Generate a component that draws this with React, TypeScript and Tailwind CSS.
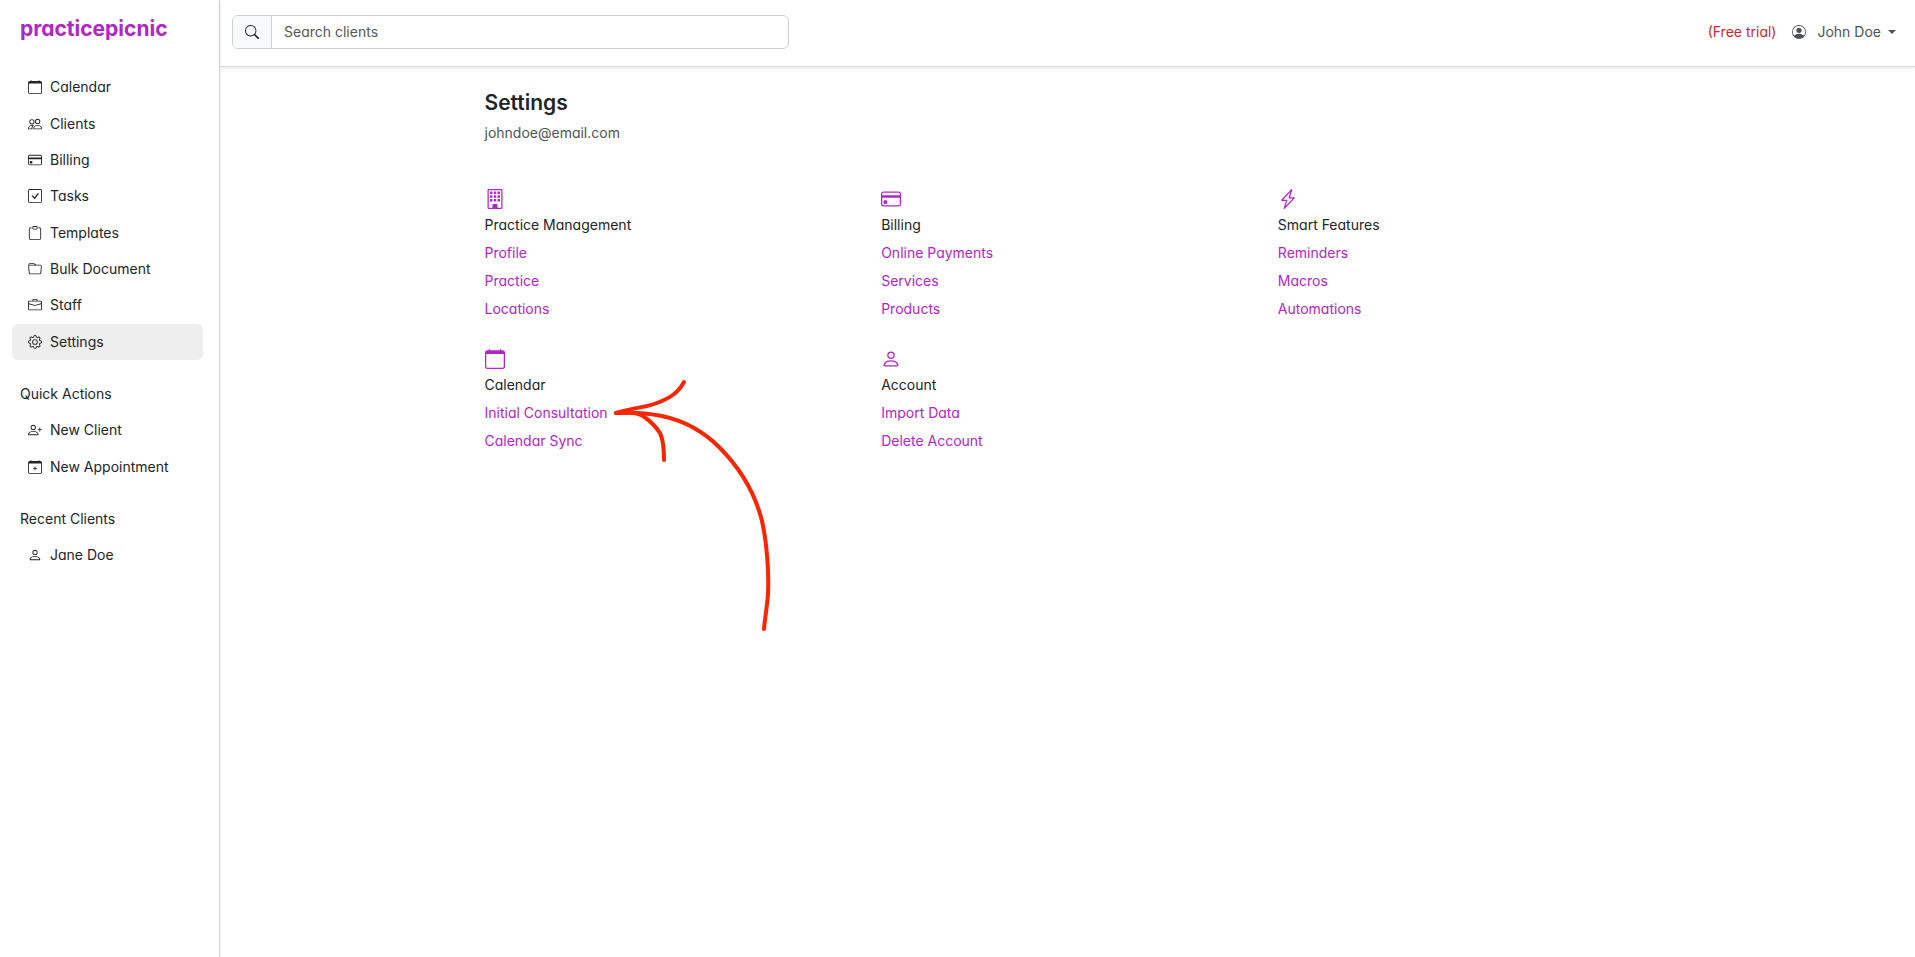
import type { IconType } from "react-icons";
import {
  BsBriefcase,
  BsBuilding,
  BsCalendar,
  BsCalendarPlus,
  BsCheckSquare,
  BsClipboard,
  BsCreditCard,
  BsFolder,
  BsGear,
  BsLightningCharge,
  BsPeople,
  BsPerson,
  BsPersonCircle,
  BsPersonPlus,
  BsSearch,
} from "react-icons/bs";

type NavEntry = { label: string; icon: IconType; active?: boolean };

const mainNav: NavEntry[] = [
  { label: "Calendar", icon: BsCalendar },
  { label: "Clients", icon: BsPeople },
  { label: "Billing", icon: BsCreditCard },
  { label: "Tasks", icon: BsCheckSquare },
  { label: "Templates", icon: BsClipboard },
  { label: "Bulk Document", icon: BsFolder },
  { label: "Staff", icon: BsBriefcase },
  { label: "Settings", icon: BsGear, active: true },
];

const quickActions: NavEntry[] = [
  { label: "New Client", icon: BsPersonPlus },
  { label: "New Appointment", icon: BsCalendarPlus },
];

const recentClients: NavEntry[] = [{ label: "Jane Doe", icon: BsPerson }];

const groups: { title: string; icon: IconType; links: string[] }[] = [
  { title: "Practice Management", icon: BsBuilding, links: ["Profile", "Practice", "Locations"] },
  { title: "Billing", icon: BsCreditCard, links: ["Online Payments", "Services", "Products"] },
  { title: "Smart Features", icon: BsLightningCharge, links: ["Reminders", "Macros", "Automations"] },
  { title: "Calendar", icon: BsCalendar, links: ["Initial Consultation", "Calendar Sync"] },
  { title: "Account", icon: BsPerson, links: ["Import Data", "Delete Account"] },
];

function NavList({ items, className }: { items: NavEntry[]; className?: string }) {
  return (
    <ul className={`grid auto-rows-fr px-3 ${className ?? ""}`}>
      {items.map(({ label, icon: Icon, active }) => (
        <li key={label} className="mr-1">
          <a
            href="#"
            aria-current={active ? "page" : undefined}
            className={`flex h-full items-center gap-2 rounded-md pl-4 ${active ? "bg-[#eeeeee]" : ""}`}
          >
            <Icon className="size-3.5 shrink-0" />
            {label}
          </a>
        </li>
      ))}
    </ul>
  );
}

function Arrow() {
  return (
    <svg
      className="pointer-events-none absolute -top-6 left-[127px]"
      width="165"
      height="260"
      viewBox="0 0 165 260"
      fill="none"
      stroke="#fa2600"
      strokeWidth="4"
      strokeLinecap="round"
      strokeLinejoin="round"
      aria-hidden="true"
    >
      <path d="M72 7C66 18 58 23 45 28C32 33 19 33 4 38C21 37 35 38 50 41C73 46 92 57 107 72C128 93 143 118 150 146C155 168 157 198 156 219C155 232 153 243 152 254" />
      <path d="M4 38C14 37 24 37 31 41C37 45 44 52 48 58C52 66 52 76 52 85" />
    </svg>
  );
}

export default function App() {
  return (
    <div className="flex min-h-screen bg-white font-['Inter',sans-serif] text-sm text-[#212529] [font-feature-settings:'cv11']">
      <aside className="w-[220px] shrink-0 border-r border-[#d5d5d5] shadow-[0_2px_4px_rgba(0,0,0,0.08)]">
        <a href="#" className="block px-5 pt-[13px] text-[21px] leading-8 font-bold text-[#b026c6]">
          practicepicnic
        </a>
        <nav aria-label="Main" className="mt-6">
          <NavList items={mainNav} className="h-[291px]" />
        </nav>
        <section className="mt-5">
          <h2 className="px-5 leading-7">Quick Actions</h2>
          <NavList items={quickActions} className="mt-1 h-[73px]" />
        </section>
        <section className="mt-5">
          <h2 className="px-5 leading-7">Recent Clients</h2>
          <NavList items={recentClients} className="mt-1 h-9" />
        </section>
      </aside>

      <div className="flex min-w-0 flex-1 flex-col">
        <header className="flex h-[67px] items-start justify-between border-b border-[#d9d9d9] pt-[15px] pr-[19px] pl-3 shadow-[0_2px_4px_rgba(0,0,0,0.08)]">
          <form className="flex h-[34px] w-[557px] overflow-hidden rounded-md border border-[#ced0d2]">
            <label
              htmlFor="search"
              aria-label="Search clients"
              className="flex w-[39px] items-center justify-center border-r border-[#ced0d2] bg-[#f8f9fa]"
            >
              <BsSearch className="size-3.5" />
            </label>
            <input
              id="search"
              type="search"
              placeholder="Search clients"
              className="min-w-0 flex-1 px-3 outline-none placeholder:text-[#55585b]"
            />
          </form>
          <div className="flex h-[34px] items-center text-[#505356]">
            <span className="text-[#c9283a]">(Free trial)</span>
            <button type="button" className="ml-4 flex items-center">
              <BsPersonCircle className="size-3.5" />
              <span className="mr-[7px] ml-[11px]">John Doe</span>
              <svg width="8" height="4" viewBox="0 0 8 4" fill="currentColor" aria-hidden="true">
                <path d="M0 0h8L4 4z" />
              </svg>
            </button>
          </div>
        </header>

        <main className="mx-auto w-full max-w-[1190px] pt-5">
          <div className="px-3">
            <h1 className="text-[21px] leading-8 font-semibold">Settings</h1>
            <p className="leading-7 text-[#505356]">johndoe@email.com</p>
          </div>
          <div className="mt-[42px] grid grid-cols-3 gap-y-[26px]">
            {groups.map(({ title, icon: Icon, links }) => (
              <section key={title} className="px-3 text-[#b026c6]">
                <Icon className="size-5" />
                <h2 className="mt-0.5 leading-7 text-[#212529]">{title}</h2>
                <ul>
                  {links.map((link) => (
                    <li key={link} className="relative leading-7">
                      <a href="#">{link}</a>
                      {link === "Initial Consultation" && <Arrow />}
                    </li>
                  ))}
                </ul>
              </section>
            ))}
          </div>
        </main>
      </div>
    </div>
  );
}
